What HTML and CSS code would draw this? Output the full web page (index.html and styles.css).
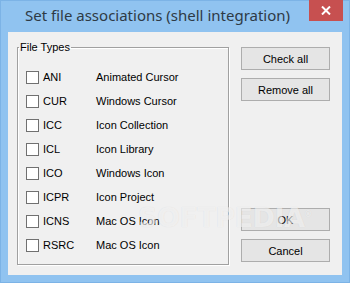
FILE: index.html
```html
<!DOCTYPE html>
<html lang="en">
<head>
    <meta charset="UTF-8">
    <title>Set file associations (shell integration)</title>
    <link rel="stylesheet" href="styles.css">
</head>
<body>
    <div class="window">
        <div class="titlebar">
            <div class="title">Set file associations (shell integration)</div>
            <div class="close">
                <svg width="10" height="9" viewBox="0 0 10 9">
                    <path d="M1 0.5 L9 8.5 M9 0.5 L1 8.5" stroke="#fff" stroke-width="2"/>
                </svg>
            </div>
        </div>

        <div class="client">
            <fieldset class="group">
                <legend>File Types</legend>
                <div class="list">
                    <div class="row"><span class="box"></span><span class="ext">ANI</span><span class="desc">Animated Cursor</span></div>
                    <div class="row"><span class="box"></span><span class="ext">CUR</span><span class="desc">Windows Cursor</span></div>
                    <div class="row"><span class="box"></span><span class="ext">ICC</span><span class="desc">Icon Collection</span></div>
                    <div class="row"><span class="box"></span><span class="ext">ICL</span><span class="desc">Icon Library</span></div>
                    <div class="row"><span class="box"></span><span class="ext">ICO</span><span class="desc">Windows Icon</span></div>
                    <div class="row"><span class="box"></span><span class="ext">ICPR</span><span class="desc">Icon Project</span></div>
                    <div class="row"><span class="box"></span><span class="ext">ICNS</span><span class="desc">Mac OS Icon</span></div>
                    <div class="row"><span class="box"></span><span class="ext">RSRC</span><span class="desc">Mac OS Icon</span></div>
                </div>
            </fieldset>

            <div class="actions">
                <button class="btn">Check all</button>
                <button class="btn">Remove all</button>
                <button class="btn push">OK</button>
                <button class="btn">Cancel</button>
            </div>

            <div class="watermark">SOFTPEDIA<sup>®</sup></div>
        </div>
    </div>
</body>
</html>
```

FILE: styles.css
```css
body {
    margin: 0;
    font-family: "Liberation Sans", Arial, sans-serif;
    font-size: 11px;
    color: #000;
}
.window {
    width: 350px;
    height: 283px;
    box-sizing: border-box;
    background-color: #90c3f0;
    border: 1px solid #7cb3e6;
    display: flex;
    flex-direction: column;
}
.titlebar {
    height: 31px;
    display: flex;
    align-items: flex-start;
}
.title {
    padding: 4px 0 0 24px;
    font-family: "Noto Sans", "Open Sans", sans-serif;
    font-size: 15px;
    line-height: 20px;
    color: #2e3a45;
}
.close {
    margin: -1px 6px 0 auto;
    width: 34px;
    height: 21px;
    background-color: #c75050;
    display: flex;
    align-items: center;
    justify-content: center;
}
.client {
    position: relative;
    flex: 1;
    margin: 0 7px 7px 7px;
    background-color: #f0f0f0;
    display: flex;
    align-items: flex-start;
    padding: 9px 0 0 9px;
}
.group {
    margin: 0;
    padding: 11px 0 0 8px;
    width: 212px;
    height: 224px;
    box-sizing: border-box;
    border: 1px solid #a0a0a0;
    box-shadow: inset 1px 1px 0 #fff, 1px 1px 0 #fff;
}
.group legend {
    padding: 0 1px;
    margin-left: -7px;
    line-height: 13px;
}
.list {
    display: grid;
    grid-auto-rows: 24px;
}
.row {
    display: flex;
    align-items: center;
}
.box {
    width: 13px;
    height: 13px;
    box-sizing: border-box;
    border: 1px solid #707070;
    background-color: #fff;
    margin-right: 4px;
}
.ext {
    width: 53px;
}
.actions {
    margin: 6px 0 0 12px;
    width: 89px;
    height: 215px;
    display: flex;
    flex-direction: column;
    gap: 8px;
}
.btn {
    height: 23px;
    box-sizing: border-box;
    border: 1px solid #adadad;
    background-color: #e5e5e5;
    font-family: "Liberation Sans", Arial, sans-serif;
    font-size: 11px;
    color: #000;
    padding: 0;
}
.btn.push {
    margin-top: auto;
}
.watermark {
    position: absolute;
    left: 130px;
    top: 170px;
    font-family: "DejaVu Sans", sans-serif;
    font-weight: bold;
    font-size: 27px;
    letter-spacing: -0.5px;
    color: rgba(255, 255, 255, 0.6);
    text-shadow: 0 0 1px rgba(0, 0, 0, 0.1);
    pointer-events: none;
}
.watermark sup {
    font-size: 8px;
}
```
